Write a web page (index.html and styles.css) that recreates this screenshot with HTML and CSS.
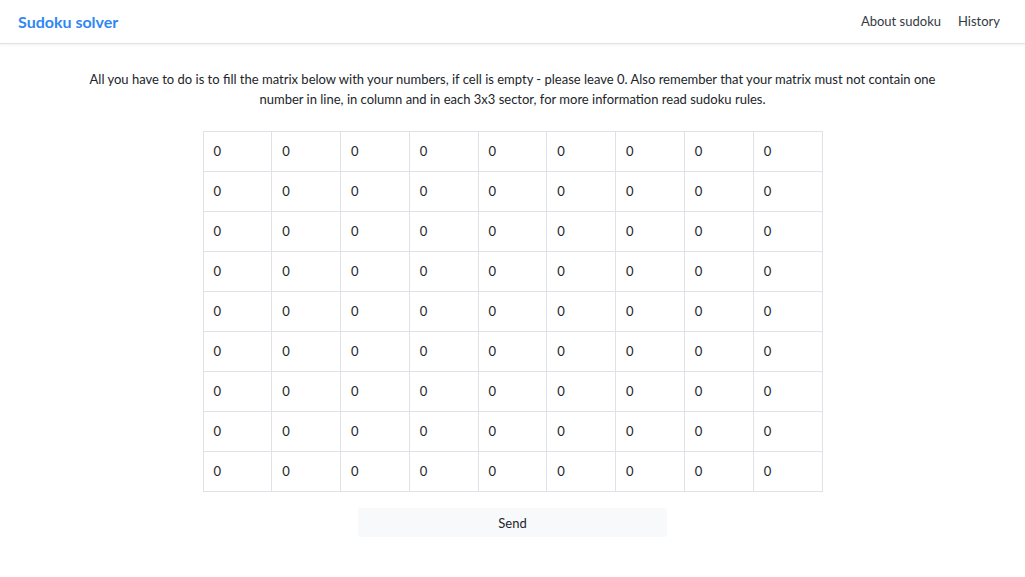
FILE: index.html
```html
<!DOCTYPE html>
<html lang="en">
<head>
<meta charset="utf-8">
<title>Sudoku solver</title>
<link rel="stylesheet" href="styles.css">
</head>
<body>
<nav class="navbar">
  <a class="brand" href="#">Sudoku solver</a>
  <div class="nav-links">
    <a href="#">About sudoku</a>
    <a href="#">History</a>
  </div>
</nav>
<main class="content">
  <p class="intro">All you have to do is to fill the matrix below with your numbers, if cell is empty - please leave 0. Also remember that your matrix must not contain one number in line, in column and in each 3x3 sector, for more information read sudoku rules.</p>
  <table class="grid">
    <tbody>
      <tr><td>0</td><td>0</td><td>0</td><td>0</td><td>0</td><td>0</td><td>0</td><td>0</td><td>0</td></tr>
      <tr><td>0</td><td>0</td><td>0</td><td>0</td><td>0</td><td>0</td><td>0</td><td>0</td><td>0</td></tr>
      <tr><td>0</td><td>0</td><td>0</td><td>0</td><td>0</td><td>0</td><td>0</td><td>0</td><td>0</td></tr>
      <tr><td>0</td><td>0</td><td>0</td><td>0</td><td>0</td><td>0</td><td>0</td><td>0</td><td>0</td></tr>
      <tr><td>0</td><td>0</td><td>0</td><td>0</td><td>0</td><td>0</td><td>0</td><td>0</td><td>0</td></tr>
      <tr><td>0</td><td>0</td><td>0</td><td>0</td><td>0</td><td>0</td><td>0</td><td>0</td><td>0</td></tr>
      <tr><td>0</td><td>0</td><td>0</td><td>0</td><td>0</td><td>0</td><td>0</td><td>0</td><td>0</td></tr>
      <tr><td>0</td><td>0</td><td>0</td><td>0</td><td>0</td><td>0</td><td>0</td><td>0</td><td>0</td></tr>
      <tr><td>0</td><td>0</td><td>0</td><td>0</td><td>0</td><td>0</td><td>0</td><td>0</td><td>0</td></tr>
    </tbody>
  </table>
  <button class="send" type="button">Send</button>
</main>
</body>
</html>
```

FILE: styles.css
```css
* { box-sizing: border-box; }
html, body { margin: 0; padding: 0; background: #fff; }
body {
  font-family: "Lato", "Open Sans", "Liberation Sans", sans-serif;
  font-size: 13px;
  color: #212529;
}
.navbar {
  height: 44px;
  display: flex;
  align-items: center;
  justify-content: space-between;
  padding: 0 25px 1px 18px;
  border-bottom: 1px solid #dee2e6;
  box-shadow: 0 1px 3px rgba(0, 0, 0, 0.06);
}
.brand {
  color: #2f87f4;
  font-size: 16px;
  font-weight: 700;
  text-decoration: none;
}
.nav-links { display: flex; gap: 17px; }
.nav-links a {
  color: #343a40;
  font-size: 13px;
  text-decoration: none;
}
.content {
  display: flex;
  flex-direction: column;
  align-items: center;
  padding-top: 25px;
}
.intro {
  margin: 0 0 22px;
  width: 880px;
  text-align: center;
  line-height: 20px;
}
.grid {
  width: 620px;
  border-collapse: collapse;
  table-layout: fixed;
}
.grid td {
  height: 40px;
  border: 1px solid #dee2e6;
  padding: 0 10px 1px;
  vertical-align: middle;
}
.send {
  margin-top: 16px;
  width: 309px;
  height: 29px;
  border: none;
  border-radius: 3px;
  background: #f8f9fa;
  color: #212529;
  font-family: inherit;
  font-size: 13px;
}
```
